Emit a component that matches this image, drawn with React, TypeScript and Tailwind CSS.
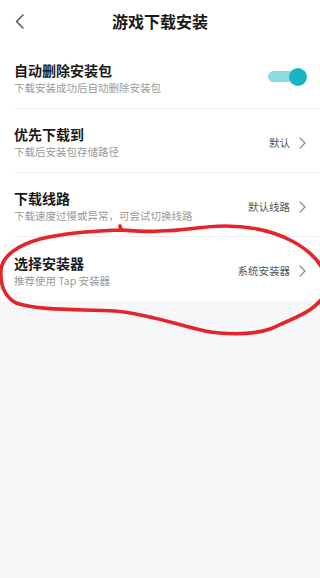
import React, { useState } from 'react'

const font = { fontFamily: '"Noto Sans CJK SC", "Noto Sans", sans-serif' }

interface RowProps {
  title: string
  desc: string
  value?: string
  last?: boolean
  children?: React.ReactNode
}

function ChevronRight() {
  return (
    <svg className="w-[7px] h-[12px]" viewBox="0 0 7 12" fill="none">
      <path d="M1 1l5 5-5 5" stroke="#8a8a8a" strokeWidth={1.2} strokeLinecap="round" strokeLinejoin="round" />
    </svg>
  )
}

function SettingRow({ title, desc, value, last, children }: RowProps) {
  return (
    <div className="pl-[14px] bg-white">
      <div
        className={`h-[64px] flex items-center pr-[14px] ${
          last ? '' : 'border-b border-[#efefef]'
        }`}
      >
        <div className="flex-1 flex flex-col pt-[3px]">
          <span className="text-[14px] leading-[20px] font-bold text-[#1a1a1a]">{title}</span>
          <span className="text-[10.5px] leading-[16px] text-[#9a9a9a]">{desc}</span>
        </div>
        {value && (
          <div className="flex items-center gap-[9px] mt-[4px]">
            <span className="text-[10.5px] leading-[14px] text-[#555]">{value}</span>
            <ChevronRight />
          </div>
        )}
        {children}
      </div>
    </div>
  )
}

export default function App() {
  const [autoDelete, setAutoDelete] = useState(true)

  return (
    <div className="relative w-[320px] h-[578px] overflow-hidden bg-[#f6f7f8]" style={font}>
      <div className="h-[45px] bg-white flex items-center relative">
        <button className="absolute left-[14px] top-[13px] w-[10px] h-[16px] flex items-center justify-center">
          <svg className="w-[9px] h-[15px]" viewBox="0 0 9 15" fill="none">
            <path d="M8 1L1.5 7.5 8 14" stroke="#555" strokeWidth={1.5} strokeLinecap="round" strokeLinejoin="round" />
          </svg>
        </button>
        <h1 className="w-full text-center text-[16px] leading-[22px] font-bold text-[#1a1a1a] -mt-[4px]">
          游戏下载安装
        </h1>
      </div>

      <SettingRow title="自动删除安装包" desc="下载安装成功后自动删除安装包">
        <button
          onClick={() => setAutoDelete(!autoDelete)}
          className="relative w-[40px] h-[20px] flex items-center mr-[-1px]"
        >
          <span
            className={`absolute left-[1px] w-[34px] h-[11px] rounded-full ${
              autoDelete ? 'bg-[#8fdae1]' : 'bg-[#dddddd]'
            }`}
          />
          <span
            className={`absolute w-[18px] h-[18px] rounded-full ${
              autoDelete ? 'left-[22px] bg-[#17b6c2]' : 'left-0 bg-white shadow'
            }`}
          />
        </button>
      </SettingRow>
      <SettingRow title="优先下载到" desc="下载后安装包存储路径" value="默认" />
      <SettingRow title="下载线路" desc="下载速度过慢或异常，可尝试切换线路" value="默认线路" />
      <SettingRow title="选择安装器" desc="推荐使用 Tap 安装器" value="系统安装器" last />

      {/* hand-drawn annotation */}
      <svg className="absolute left-0 top-0 pointer-events-none" width="320" height="578" viewBox="0 0 320 578" fill="none">
        <path
          d="M120 226 L121 230 C135 231 148 232 160 231 C185 231 200 226 225 226 C255 226 275 232 292 241 C305 248 318 258 324 272 C328 288 324 298 318 303 C310 312 295 318 270 329 C250 336 220 334 205 331 C180 326 150 314 115 311 C80 309 40 311 16 303 C5 297 0 285 1 270 C2 256 18 245 40 239 C60 234 90 231 121 230"
          stroke="#e5232a"
          strokeWidth={3.6}
          strokeLinecap="round"
          strokeLinejoin="round"
        />
      </svg>
    </div>
  )
}
